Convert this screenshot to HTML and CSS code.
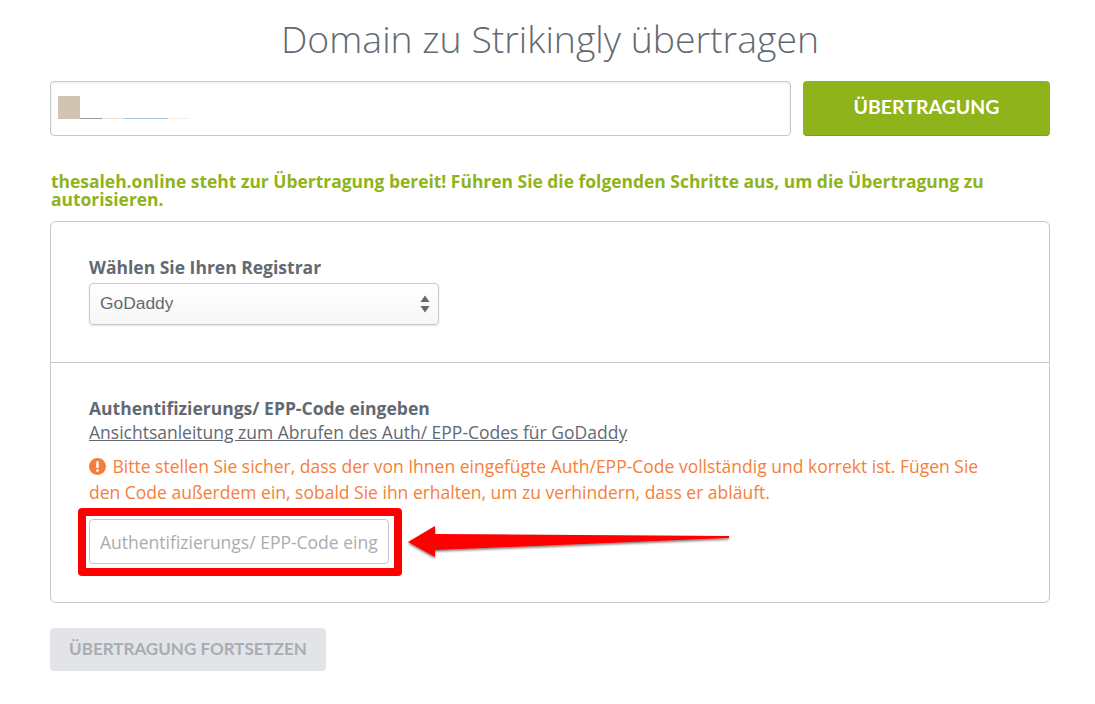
FILE: index.html
```html
<!DOCTYPE html>
<html lang="de">
<head>
  <meta charset="UTF-8">
  <title>Domain zu Strikingly übertragen</title>
  <link rel="stylesheet" href="styles.css">
</head>
<body>

  <div class="page">
    <h1>Domain zu Strikingly übertragen</h1>

    <div class="domain-row">
      <div class="domain-input">
        <div class="redacted">
          <span class="redacted-block"></span>
          <span class="redacted-line line-grey"></span>
          <span class="redacted-line line-peach"></span>
          <span class="redacted-line line-blue"></span>
          <span class="redacted-line line-cream"></span>
        </div>
      </div>
      <button class="transfer-btn">ÜBERTRAGUNG</button>
    </div>

    <p class="ready-msg">thesaleh.online steht zur Übertragung bereit! Führen Sie die folgenden Schritte aus, um die Übertragung zu autorisieren.</p>

    <div class="card">
      <div class="section section-registrar">
        <label class="field-label">Wählen Sie Ihren Registrar</label>
        <div class="select-box">
          <span>GoDaddy</span>
          <svg class="select-arrows" width="10" height="18" viewBox="0 0 10 18">
            <path d="M5 0.5 L9.5 7 L0.5 7 Z" fill="#636972"/>
            <path d="M0.5 11 L9.5 11 L5 17.5 Z" fill="#636972"/>
          </svg>
        </div>
      </div>

      <div class="section section-code">
        <label class="field-label">Authentifizierungs/ EPP-Code eingeben</label>
        <a class="guide-link" href="#">Ansichtsanleitung zum Abrufen des Auth/ EPP-Codes für GoDaddy</a>
        <p class="warning">
          <svg class="warning-icon" width="17" height="17" viewBox="0 0 16 16">
            <circle cx="8" cy="8" r="8" fill="#f47f3b"/>
            <rect x="6.8" y="3" width="2.4" height="6.5" rx="0.6" fill="#fff"/>
            <rect x="6.8" y="10.6" width="2.4" height="2.4" rx="0.6" fill="#fff"/>
          </svg>
          Bitte stellen Sie sicher, dass der von Ihnen eingefügte Auth/EPP-Code vollständig und korrekt ist. Fügen Sie den Code außerdem ein, sobald Sie ihn erhalten, um zu verhindern, dass er abläuft.
        </p>
        <div class="code-row">
          <div class="highlight-box">
            <input class="code-input" type="text" placeholder="Authentifizierungs/ EPP-Code eingeben">
          </div>
          <!-- arrow from the annotated screenshot -->
          <svg class="arrow" width="332" height="50" viewBox="0 0 332 50">
            <defs>
              <filter id="arrowShadow" x="-5%" y="-30%" width="110%" height="170%">
                <feDropShadow dx="0" dy="1.5" stdDeviation="1" flood-color="#000" flood-opacity="0.55"/>
              </filter>
            </defs>
            <path d="M8 26 L35 10 L35 18 L329 20 L329 22 L35 34 L35 41 Z" fill="#ff0000" filter="url(#arrowShadow)"/>
          </svg>
        </div>
      </div>
    </div>

    <button class="continue-btn" disabled>ÜBERTRAGUNG FORTSETZEN</button>
  </div>

</body>
</html>
```

FILE: styles.css
```css
* {
  margin: 0;
  padding: 0;
  box-sizing: border-box;
}

body {
  font-family: 'Open Sans', sans-serif;
  background-color: #fff;
  color: #636972;
}

.page {
  width: 1000px;
  margin-left: 50px;
}

h1 {
  font-size: 37.4px;
  font-weight: 300;
  line-height: 52px;
  margin-top: 13px;
  text-align: center;
  color: #636972;
}

.domain-row {
  display: flex;
  justify-content: space-between;
  margin-top: 16px;
}

.domain-input {
  width: 741px;
  height: 55px;
  border: 1px solid #c6c8cc;
  border-radius: 4px;
  box-shadow: inset 0 1px 3px rgba(0, 0, 0, 0.08);
  padding: 14px 7px;
}

.redacted {
  display: flex;
  align-items: flex-end;
  height: 23px;
}

.redacted-block {
  width: 22px;
  height: 23px;
  background-color: #d1c4b2;
}

.redacted-line {
  height: 1px;
}

.line-grey {
  width: 22px;
  background-color: #9a98a0;
}

.line-peach {
  width: 22px;
  background-color: #f0e0d4;
}

.line-blue {
  width: 44px;
  background-color: #a3c8e6;
}

.line-cream {
  width: 21px;
  background-color: #f8ecdf;
}

.transfer-btn {
  width: 247px;
  height: 55px;
  padding-bottom: 3px;
  background-color: #8fb31b;
  color: white;
  border: none;
  border-bottom: 1px solid #7f9f18;
  border-radius: 4px;
  font-family: 'Lato', sans-serif;
  font-size: 19.5px;
  font-weight: 700;
}

.ready-msg {
  margin-top: 36px;
  margin-bottom: 13px;
  margin-left: 1px;
  font-size: 17.46px;
  font-weight: 700;
  line-height: 18px;
  color: #8fb31b;
}

.card {
  border: 1px solid #c6c8cc;
  border-radius: 6px;
}

.section {
  padding: 0 38px;
}

.section-registrar {
  height: 141px;
  padding-top: 34px;
  border-bottom: 1px solid #c6c8cc;
}

.section-code {
  height: 239px;
  padding-top: 34px;
}

.field-label {
  display: block;
  font-size: 17.5px;
  font-weight: 700;
  line-height: 22px;
  color: #636972;
}

.section-code .field-label {
  line-height: 23px;
}

.select-box {
  display: flex;
  justify-content: space-between;
  align-items: center;
  width: 350px;
  height: 42px;
  margin-top: 5px;
  padding: 0 8px 2px 10px;
  border: 1px solid #c6c8cc;
  border-radius: 4px;
  background: linear-gradient(#fff, #f6f6f6);
  box-shadow: 0 1px 2px rgba(0, 0, 0, 0.1);
  font-family: 'Liberation Sans', sans-serif;
  font-size: 17.4px;
  color: #636972;
}

.select-arrows {
  margin-top: 2px;
}

.guide-link {
  display: block;
  font-size: 17.5px;
  line-height: 24px;
  color: #636972;
  text-decoration: underline;
}

.warning {
  margin-top: 9px;
  font-size: 17.5px;
  line-height: 26px;
  color: #f47f3b;
}

.warning-icon {
  margin-right: 2px;
  vertical-align: -2px;
}

.code-row {
  position: relative;
  margin-top: 3px;
}

.highlight-box {
  display: flex;
  align-items: flex-start;
  width: 324px;
  height: 68px;
  margin-left: -11px;
  padding: 3px 0 0 3px;
  border: 8px solid #ff0000;
  border-radius: 4px;
  background-color: #fff;
}

.code-input {
  width: 300px;
  height: 45px;
  padding: 0 10px;
  border: 1px solid #c6c8cc;
  border-radius: 4px;
  font-family: 'Open Sans', sans-serif;
  font-size: 17.5px;
  color: #636972;
}

.code-input::placeholder {
  color: #a9adb3;
  opacity: 1;
}

.arrow {
  position: absolute;
  left: 311px;
  top: 8px;
}

.continue-btn {
  display: block;
  width: 276px;
  height: 43px;
  margin-top: 25px;
  padding-bottom: 2px;
  background-color: #e2e4e8;
  color: #a9adb3;
  border: none;
  border-radius: 4px;
  font-family: 'Lato', sans-serif;
  font-size: 17px;
  font-weight: 700;
}
```
